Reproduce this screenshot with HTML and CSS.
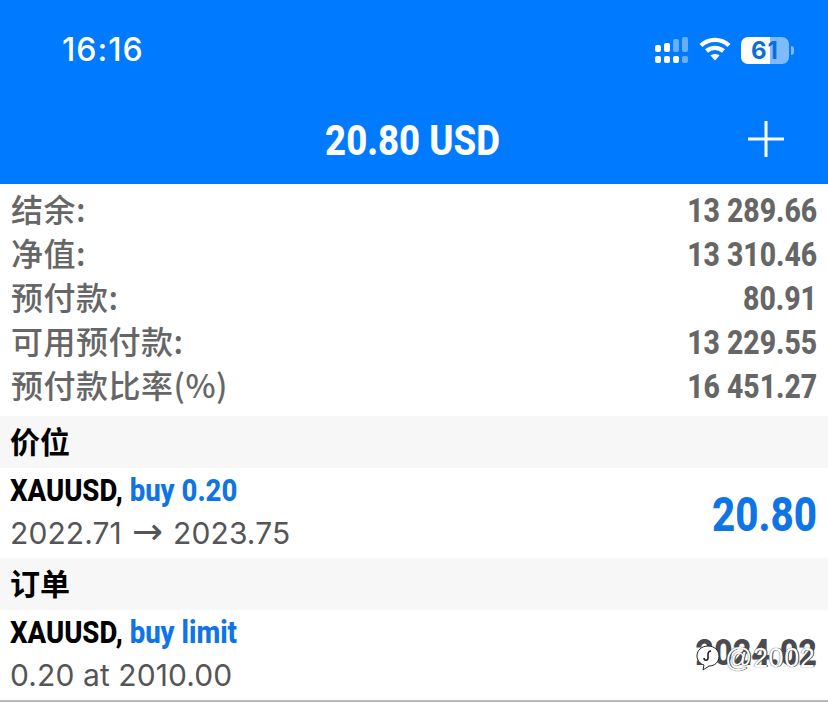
FILE: index.html
```html
<!DOCTYPE html>
<html lang="zh">
<head>
<meta charset="utf-8">
<title>交易</title>
<link rel="stylesheet" href="styles.css">
</head>
<body>
<header class="top">
  <div class="status">
    <span class="clock">16:16</span>
    <div class="status-icons">
      <svg class="signal" width="34" height="26" viewBox="0 0 34 26">
        <g fill="#fff">
          <rect x="0" y="8" width="6" height="7" rx="2"/>
          <rect x="9" y="6" width="6" height="9" rx="2"/>
          <rect x="0" y="19" width="6" height="7" rx="2"/>
          <rect x="9" y="19" width="6" height="7" rx="2"/>
          <rect x="18" y="19" width="6" height="7" rx="2"/>
        </g>
        <g fill="#fff" fill-opacity=".4">
          <rect x="18" y="2" width="6" height="13" rx="2"/>
          <rect x="27" y="0" width="6" height="15" rx="2"/>
          <rect x="27" y="19" width="6" height="7" rx="2"/>
        </g>
      </svg>
      <svg class="wifi" width="32" height="24" viewBox="0 0 32 24">
        <g fill="none" stroke="#fff" stroke-width="4.4">
          <path d="M2 8.5C10 1 22 1 30 8.5"/>
          <path d="M7.5 14C12.5 9.8 19.5 9.8 24.5 14"/>
        </g>
        <path d="M11.5 18.6C14 16.6 18 16.6 20.5 18.6L16 23.4Z" fill="#fff"/>
      </svg>
      <div class="battery">
        <div class="battery-body"><span class="battery-level">61</span></div>
        <span class="battery-tip"></span>
      </div>
    </div>
  </div>
  <div class="title-bar">
    <h1 class="title"><span class="title-text">20.80 USD</span></h1>
    <svg class="plus" width="36" height="36" viewBox="0 0 36 36">
      <path d="M18 0V36M0 18H36" stroke="#fff" stroke-width="3" fill="none"/>
    </svg>
  </div>
</header>
<main>
  <section class="summary">
    <div class="sum-row"><span class="sum-label">结余:</span><span class="sum-value">13 289.66</span></div>
    <div class="sum-row"><span class="sum-label">净值:</span><span class="sum-value">13 310.46</span></div>
    <div class="sum-row"><span class="sum-label">预付款:</span><span class="sum-value">80.91</span></div>
    <div class="sum-row"><span class="sum-label">可用预付款:</span><span class="sum-value">13 229.55</span></div>
    <div class="sum-row"><span class="sum-label">预付款比率(%)</span><span class="sum-value">16 451.27</span></div>
  </section>
  <h2 class="section-head">价位</h2>
  <div class="trade">
    <div class="trade-main">
      <div class="trade-title"><span class="symbol">XAUUSD,</span> <span class="side">buy 0.20</span></div>
      <div class="trade-sub">2022.71 <span class="arrow">→</span> 2023.75</div>
    </div>
    <span class="profit">20.80</span>
  </div>
  <h2 class="section-head">订单</h2>
  <div class="trade trade-last">
    <div class="trade-main">
      <div class="trade-title"><span class="symbol">XAUUSD,</span> <span class="side">buy limit</span></div>
      <div class="trade-sub">0.20 at 2010.00</div>
    </div>
    <div class="date-stack">
      <span class="date">2024.02</span>
      <span class="watermark"><svg class="wm-icon" width="26" height="28" viewBox="0 0 26 28"><path d="M13 2C7 2 2 6 2 12c0 4 3 8 7 9l-1 5 6-4c6 0 10-4 10-10S19 2 13 2Z" fill="#fff" stroke="#222" stroke-width="1"/><path d="M16 7c-3 0-3 2-3 4v3c0 3-4 3-4 0" fill="none" stroke="#222" stroke-width="1.6"/></svg><span class="wm-text">@2002</span></span>
    </div>
  </div>
</main>
</body>
</html>
```
FILE: styles.css
```css
* { box-sizing: border-box; margin: 0; padding: 0; }
html, body { background: #fff; }
body {
  width: 828px;
  height: 703px;
  overflow: hidden;
  font-family: "Liberation Sans", "Noto Sans CJK SC", sans-serif;
}
.top {
  height: 184px;
  background: #007aff;
  color: #fff;
  display: flex;
  flex-direction: column;
}
.status {
  height: 96px;
  padding: 28px 34px 0 62px;
  display: flex;
  justify-content: space-between;
  align-items: flex-start;
}
.clock {
  font-family: Inter, "Liberation Sans", sans-serif;
  font-size: 32px;
  line-height: 44px;
  font-weight: 500;
  letter-spacing: 1px;
}
.status-icons {
  display: flex;
  align-items: flex-start;
  gap: 10px;
  padding-top: 9px;
}
.battery { display: flex; align-items: center; gap: 2px; }
.battery-body {
  width: 48px;
  height: 27px;
  border-radius: 7px;
  background: linear-gradient(to right, #fff 0, #fff 61%, #7fbcff 61%, #7fbcff 100%);
  display: flex;
  align-items: center;
  justify-content: center;
}
.battery-level {
  font-family: Inter, "Liberation Sans", sans-serif;
  font-size: 24px;
  font-weight: 700;
  color: #0a6fd8;
  letter-spacing: 1px;
}
.battery-tip {
  width: 3px;
  height: 9px;
  border-radius: 0 3px 3px 0;
  background: #7fbcff;
}
.title-bar {
  height: 88px;
  padding: 0 44px 0 0;
  display: flex;
  align-items: center;
  justify-content: flex-end;
  position: relative;
}
.title {
  position: absolute;
  left: 0;
  right: 0;
  top: 20px;
  text-align: center;
  font-family: Roboto, "Liberation Sans", sans-serif;
  font-size: 42px;
  line-height: 50px;
  font-weight: 800;
}
.title-text {
  display: inline-block;
  margin-right: 4px;
  transform: scaleX(.87);
}
.plus { margin-top: -2px; }
.summary {
  padding-top: 4px;
  height: 232px;
}
.sum-row {
  height: 44px;
  padding: 0 11px;
  display: flex;
  justify-content: space-between;
  align-items: center;
  color: #666;
}
.sum-label {
  font-family: "Noto Sans CJK SC", sans-serif;
  font-size: 32px;
  line-height: 40px;
  font-weight: 500;
  letter-spacing: 0.5px;
  position: relative;
  top: -2px;
}
.sum-value {
  font-family: Roboto, "Liberation Sans", sans-serif;
  font-size: 33px;
  font-weight: 800;
  transform: scaleX(.86);
  transform-origin: right center;
}
.section-head {
  height: 52px;
  padding: 0 10px;
  background: #f7f7f7;
  color: #000;
  font-family: "Noto Sans CJK SC", sans-serif;
  font-size: 30px;
  font-weight: 700;
  line-height: 48px;
}
.trade {
  height: 90px;
  padding: 0 11px 0 10px;
  display: flex;
  justify-content: space-between;
  align-items: center;
}
.trade-last {
  height: 92px;
  border-bottom: 2px solid #b9b9bd;
}
.trade-main { display: flex; flex-direction: column; }
.trade-title {
  font-family: Roboto, "Liberation Sans", sans-serif;
  font-size: 32px;
  line-height: 36px;
  font-weight: 800;
  transform: scaleX(.86);
  transform-origin: left center;
  margin-bottom: 4px;
  position: relative;
  top: -2px;
}
.symbol { color: #000; }
.side { color: #0f75e6; }
.trade-sub {
  font-family: Inter, "Liberation Sans", sans-serif;
  font-size: 30px;
  line-height: 38px;
  color: #555558;
  letter-spacing: .1px;
}
.arrow {
  font-family: "DejaVu Sans", sans-serif;
  font-weight: 400;
  font-size: 37px;
  line-height: 0;
  margin: 0 1.5px;
}
.profit {
  font-family: Roboto, "Liberation Sans", sans-serif;
  font-size: 48px;
  font-weight: 800;
  color: #0f75e6;
  transform: scaleX(.84);
  transform-origin: right center;
  position: relative;
  top: 1px;
}
.date-stack {
  position: relative;
  width: 140px;
  height: 40px;
  top: -2px;
}
.date {
  display: block;
  font-family: Roboto, "Liberation Sans", sans-serif;
  font-size: 36px;
  line-height: 40px;
  font-weight: 800;
  color: #4a4a50;
  text-align: right;
  white-space: nowrap;
  transform: scaleX(.9);
  transform-origin: right center;
}
.watermark {
  position: absolute;
  left: 18px;
  top: 10px;
  display: flex;
  align-items: center;
  gap: 4px;
  color: #fff;
}
.wm-icon { flex: none; }
.wm-text {
  font-size: 27px;
  line-height: 30px;
  color: #fff;
  text-shadow: 0 0 1px #222, 1px 0 0 #555;
  letter-spacing: .6px;
}
```
